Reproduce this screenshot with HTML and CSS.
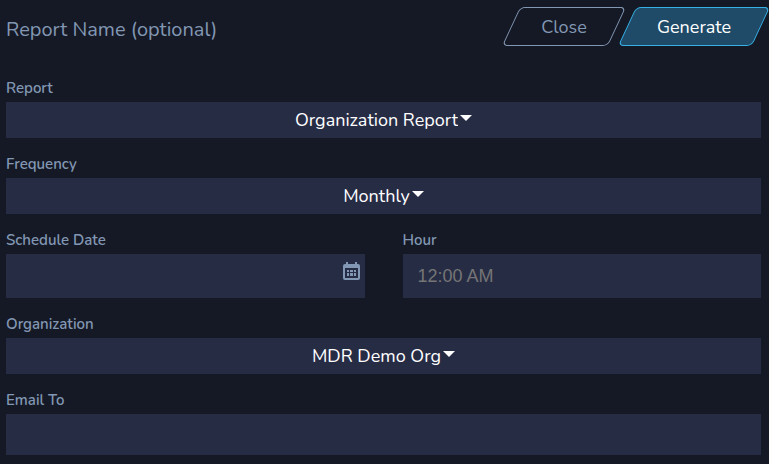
FILE: index.html
```html
<!DOCTYPE html>
<html lang="en">
<head>
<meta charset="utf-8">
<title>Generate Report</title>
<link rel="stylesheet" href="styles.css">
</head>
<body>
<form class="report-form">
  <header class="header">
    <input class="report-name" type="text" placeholder="Report Name (optional)" aria-label="Report Name (optional)">
    <button class="action" type="button">Close</button>
    <button class="action action-primary" type="submit">Generate</button>
  </header>
  <div class="field">
    <label class="label" for="report">Report</label>
    <div class="dropdown">
      <select class="select" id="report"><option>Organization Report</option></select>
    </div>
  </div>
  <div class="field">
    <label class="label" for="frequency">Frequency</label>
    <div class="dropdown">
      <select class="select" id="frequency"><option>Monthly</option></select>
    </div>
  </div>
  <div class="columns">
    <div class="field">
      <label class="label" for="date">Schedule Date</label>
      <div class="date-box">
        <input class="date-input" id="date" type="text">
        <svg class="calendar" viewBox="0 0 17 18" aria-hidden="true">
          <path fill="currentColor" fill-rule="evenodd" d="M3 0h2v2h7V0h2v2h1a2 2 0 0 1 2 2v12a2 2 0 0 1-2 2H2a2 2 0 0 1-2-2V4a2 2 0 0 1 2-2h1zM2 6v10h13V6z"/>
          <path fill="currentColor" d="M4 8h2v2H4zM7 8h3v2H7zM11 8h2v2h-2zM4 11h2v3H4zM7 11h3v3H7zM11 11h2v3h-2z"/>
        </svg>
      </div>
    </div>
    <div class="field">
      <label class="label" for="hour">Hour</label>
      <input class="input input-hour" id="hour" type="text" placeholder="12:00 AM">
    </div>
  </div>
  <div class="field">
    <label class="label" for="organization">Organization</label>
    <div class="dropdown">
      <select class="select" id="organization"><option>MDR Demo Org</option></select>
    </div>
  </div>
  <div class="field">
    <label class="label" for="email">Email To</label>
    <input class="input input-email" id="email" type="email">
  </div>
</form>
</body>
</html>
```
FILE: styles.css
```css
* {
  box-sizing: border-box;
}

body {
  margin: 0;
  background: #151925;
  color: #8297b3;
  font-family: Nunito, Lato, sans-serif;
  font-size: 18px;
}

input,
select,
button {
  margin: 0;
  padding: 0;
  border: 0;
  border-radius: 0;
  outline: 0;
  background: transparent;
  color: inherit;
  font: inherit;
}

.report-form {
  display: flex;
  flex-direction: column;
  gap: 14px;
  padding: 7px 8px 8px 6px;
}

.header {
  display: flex;
  gap: 10px;
  margin-bottom: 11px;
}

.report-name {
  flex: 1;
  min-width: 0;
  height: 44px;
  font-size: 20px;
}

.report-name::placeholder {
  color: #8297b3;
  opacity: 1;
}

.action {
  position: relative;
  z-index: 0;
  width: 106px;
  height: 39px;
}

.action::before {
  content: "";
  position: absolute;
  inset: 0;
  z-index: -1;
  border: 1px solid #8297b3;
  border-radius: 5px;
  transform: skewX(-25deg);
}

.action-primary {
  width: 134px;
  color: #fff;
}

.action-primary::before {
  border-color: #36b0e6;
  background: #204b68;
}

.field {
  display: flex;
  flex-direction: column;
  gap: 2px;
}

.label {
  font-size: 15px;
  font-weight: 600;
  line-height: 24px;
}

.columns {
  display: grid;
  grid-template-columns: 1fr 1fr;
  gap: 38px;
}

.dropdown {
  display: flex;
  justify-content: center;
  align-items: center;
  gap: 2px;
  height: 36px;
  background: #272c45;
  color: #fff;
}

.dropdown::after {
  content: "";
  margin-bottom: 4px;
  border: 6px solid transparent;
  border-top: 6px solid currentColor;
  border-bottom: 0;
}

.select {
  appearance: none;
  field-sizing: content;
  height: 36px;
}

.input {
  width: 100%;
  padding: 0 15px;
  background: #272c45;
}

.input-hour {
  height: 44px;
  font-family: "Liberation Sans", sans-serif;
}

.input-hour::placeholder {
  color: #757575;
}

.input-email {
  height: 41px;
}

.date-box {
  display: flex;
  align-items: center;
  height: 44px;
  padding: 0 5px 10px 15px;
  background: #272c45;
}

.date-input {
  flex: 1;
  min-width: 0;
}

.calendar {
  width: 17px;
  height: 18px;
}
```
